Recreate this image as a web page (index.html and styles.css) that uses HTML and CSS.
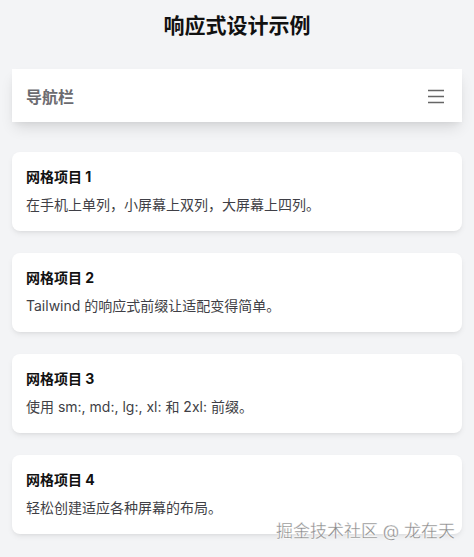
FILE: index.html
```html
<!DOCTYPE html>
<html lang="zh-CN">
<head>
    <meta charset="UTF-8">
    <meta name="viewport" content="width=device-width, initial-scale=1.0">
    <title>响应式设计示例</title>
    <link rel="stylesheet" href="styles.css">
</head>
<body>
    <div class="container">
        <h1>响应式设计示例</h1>

        <nav class="navbar">
            <span class="brand">导航栏</span>
            <button class="menu-btn" aria-label="菜单">
                <svg width="18" height="16" viewBox="0 0 18 16" fill="none" stroke="currentColor" stroke-width="1.6">
                    <path d="M1 2.5h16M1 8.5h16M1 14.5h16"/>
                </svg>
            </button>
        </nav>

        <div class="grid">
            <div class="card">
                <h2>网格项目 1</h2>
                <p>在手机上单列，小屏幕上双列，大屏幕上四列。</p>
            </div>
            <div class="card">
                <h2>网格项目 2</h2>
                <p>Tailwind 的响应式前缀让适配变得简单。</p>
            </div>
            <div class="card">
                <h2>网格项目 3</h2>
                <p>使用 sm:, md:, lg:, xl: 和 2xl: 前缀。</p>
            </div>
            <div class="card">
                <h2>网格项目 4</h2>
                <p>轻松创建适应各种屏幕的布局。</p>
            </div>
        </div>
    </div>

    <div class="watermark">掘金技术社区 @ 龙在天</div>
</body>
</html>
```

FILE: styles.css
```css
body {
    font-family: Inter, "Noto Sans CJK SC", sans-serif;
    margin: 0;
    padding: 0;
    background-color: #f3f4f6;
    color: #111;
}
.container {
    padding: 12px 12px 24px;
}
h1 {
    margin: 0 0 29px;
    font-size: 21px;
    line-height: 28px;
    font-weight: 700;
    text-align: center;
    color: #111;
}
.navbar {
    background-color: #fff;
    height: 53px;
    padding: 0 14px;
    display: flex;
    align-items: center;
    justify-content: space-between;
    box-shadow: 0 8px 14px -3px rgba(0, 0, 0, 0.12), 0 3px 6px -2px rgba(0, 0, 0, 0.06);
}
.brand {
    font-size: 16px;
    font-weight: 700;
    color: #6b6b70;
}
.menu-btn {
    background: none;
    border: none;
    padding: 0;
    margin-right: 3px;
    color: #666;
    display: flex;
    cursor: pointer;
}
.grid {
    margin-top: 30px;
    display: grid;
    grid-template-columns: 1fr;
    gap: 22px;
}
.card {
    background-color: #fff;
    border-radius: 8px;
    padding: 15px 14px 16px;
    box-shadow: 0 3px 6px -1px rgba(0, 0, 0, 0.08), 0 2px 4px -2px rgba(0, 0, 0, 0.06);
}
.card h2 {
    margin: 0 0 8px;
    font-size: 14px;
    line-height: 20px;
    font-weight: 700;
    color: #111;
}
.card p {
    margin: 0;
    font-size: 14px;
    line-height: 20px;
    color: #3f3f46;
}
.watermark {
    position: absolute;
    left: 276px;
    top: 519px;
    font-size: 17px;
    line-height: 24px;
    color: #8a8a8a;
    -webkit-text-stroke: 0.3px #fff;
    text-shadow: 0 0 1px #fff, 0 0 2px #fff;
    white-space: nowrap;
}
```
